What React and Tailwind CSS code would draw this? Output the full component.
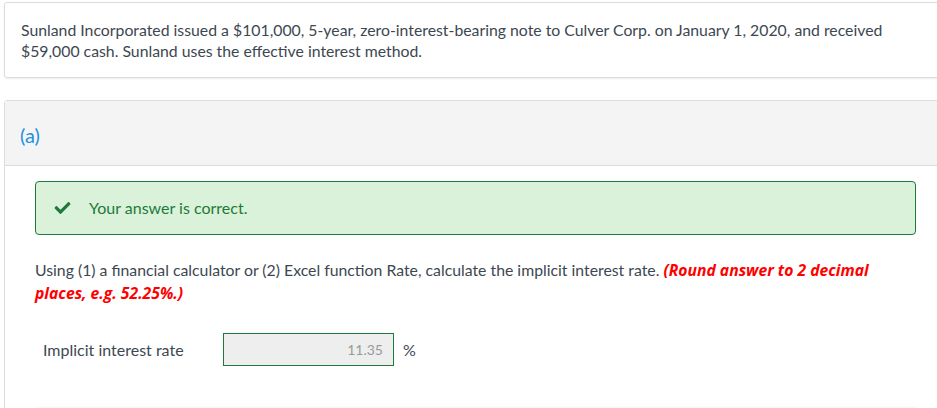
import { FaCheck } from 'react-icons/fa';

const App = () => {
  return (
    <div className="w-[937px] h-[408px] overflow-hidden bg-white text-[16px] text-[#3d4751]" style={{ fontFamily: 'Lato, "Noto Sans", sans-serif' }}>
      <div className="w-[950px] pl-1 pt-[2px]">
        {/* Question stem */}
        <div className="border border-[#dcdcdc] rounded-[3px] shadow-[0_1px_2px_rgba(0,0,0,0.08)] pl-4 pr-10 pt-[16px] pb-[16px] leading-[21px] text-[15.8px]">
          <p className="w-[880px]">
            Sunland Incorporated issued a $101,000, 5-year, zero-interest-bearing note to Culver Corp. on January 1, 2020, and received $59,000 cash. Sunland uses the effective interest method.
          </p>
        </div>

        {/* Part (a) */}
        <div className="mt-[22px] border border-[#dcdcdc] rounded-t-[3px]">
          <div className="h-[65px] bg-[#f4f4f4] border-b border-[#dcdcdc] flex items-center pl-[15px] pt-[4px]">
            <span className="text-[20px] text-[#1e8fe1]">(a)</span>
          </div>

          <div className="pl-[30px] pt-[15px]">
            <div className="w-[881px] h-[54px] rounded-[4px] border border-[#1d7a3a] bg-[#d9f2d9] flex items-center pl-[17px]">
              <FaCheck className="w-[19px] h-[16px] text-[#1d7a3a]" />
              <span className="ml-[17px] text-[#1d7a3a]">Your answer is correct.</span>
            </div>

            <p className="w-[881px] mt-[23px] leading-[23px] text-[15.8px]">
              Using (1) a financial calculator or (2) Excel function Rate, calculate the implicit interest rate.{' '}
              <span className="font-bold italic text-[15.7px] leading-[19px] text-[#f00]" style={{ fontFamily: '"Open Sans", Lato, sans-serif' }}>(Round answer to 2 decimal places, e.g. 52.25%.)</span>
            </p>

            <div className="mt-[29px] flex items-center">
              <span className="w-[188px] pl-[8px]">Implicit interest rate</span>
              <div className="w-[171px] h-[33px] border border-[#1d7a3a] bg-[#eeeeee] flex items-center justify-end pr-[10px] text-[14px] text-[#9a9a9a]">
                11.35
              </div>
              <span className="ml-[9px]">%</span>
            </div>

            <div className="mt-[42px] ml-[2px] w-[879px] h-6 border-t border-[#dcdcdc] shadow-[0_-1px_2px_rgba(0,0,0,0.05)]" />
          </div>
        </div>
      </div>
    </div>
  );
};

export default App;
